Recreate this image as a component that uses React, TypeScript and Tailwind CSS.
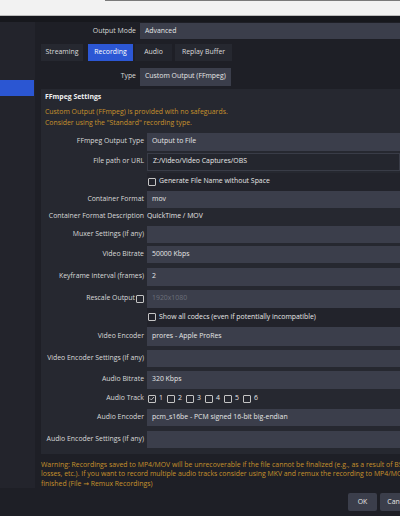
import type { ReactNode } from "react";

function Box({ checked }: { checked?: boolean }) {
  return (
    <span className="inline-flex w-[8px] h-[8px] shrink-0 items-center justify-center border border-[#c4c4c4] rounded-[1px]">
      {checked && (
        <svg viewBox="0 0 8 8" className="w-[7px] h-[7px]">
          <path d="M1.3 4.1 3.1 5.9 6.7 2" fill="none" stroke="#e4e4e4" strokeWidth="1" />
        </svg>
      )}
    </span>
  );
}

function Row({ label, cls, children }: { label: ReactNode; cls: string; children?: ReactNode }) {
  return (
    <div className={`flex items-stretch ${cls}`}>
      <div className="w-[103px] shrink-0 flex items-center justify-end text-[#d9d9d9] whitespace-nowrap">{label}</div>
      <div className="flex-1 ml-[3px] flex items-stretch min-w-0">{children}</div>
    </div>
  );
}

function Combo({ value, muted }: { value?: string; muted?: boolean }) {
  return (
    <div className={`flex-1 bg-[#3b3e4b] flex items-center pl-[5px] whitespace-nowrap ${muted ? "text-[#6c6f7a]" : "text-[#e6e6e6]"}`}>
      {value}
    </div>
  );
}

function CheckRow({ text, cls }: { text: string; cls: string }) {
  return (
    <Row label="" cls={cls}>
      <div className="flex-1 bg-[#22232b] flex items-center gap-[3px] pl-[1px] text-[#e6e6e6] whitespace-nowrap">
        <Box />
        <span>{text}</span>
      </div>
    </Row>
  );
}

const tabs = [
  { name: "Streaming", cls: "w-[42px] bg-[#262830] text-[#dcdcdc]" },
  { name: "Recording", cls: "w-[45px] ml-[5px] bg-[#2c57d4] text-white" },
  { name: "Audio", cls: "w-[37px] ml-[2px] bg-[#23252d] text-[#dcdcdc]" },
  { name: "Replay Buffer", cls: "w-[57px] ml-[3px] bg-[#262830] text-[#dcdcdc]" },
];

export default function App() {
  return (
    <div className="w-[400px] h-[516px] overflow-hidden bg-[#1e1f26] font-['Open_Sans','DejaVu_Sans',sans-serif] text-[6.9px] leading-none">
      {/* strip of the window above */}
      <div className="h-[16px] bg-[#f2f2f2] border-b border-[#bcbcbc]">
        <div className="h-[1px] ml-[105px] bg-[#7a7a7a]" />
      </div>
      <div className="h-[6px] bg-[#17181d]" />

      <div className="flex h-[466px]">
        <div className="w-[35px] shrink-0 bg-[#23242c]">
          <div className="mt-[58px] h-[16px] w-[34px] bg-[#2b56d2]" />
        </div>

        <div className="flex-1 ml-[6px] flex flex-col min-w-0">
          {/* output mode */}
          <div className="flex mt-[1px] h-[17px]">
            <div className="w-[95px] shrink-0 flex items-center justify-end text-[#d9d9d9]">Output Mode</div>
            <div className="flex-1 ml-[4px] bg-[#3b3e4b] flex items-center pl-[5px] text-[#e6e6e6]">Advanced</div>
          </div>

          {/* tabs */}
          <div className="flex mt-[5px] h-[18px]">
            {tabs.map((t) => (
              <div key={t.name} className={`flex items-center justify-center whitespace-nowrap ${t.cls}`}>
                {t.name}
              </div>
            ))}
          </div>

          {/* type */}
          <div className="flex mt-[7px] h-[18px]">
            <div className="w-[95px] shrink-0 flex items-center justify-end text-[#d9d9d9]">Type</div>
            <div className="ml-[4px] bg-[#3b3e4b] flex items-center pl-[5px] pr-[5px] text-[#e6e6e6]">Custom Output (FFmpeg)</div>
          </div>

          {/* group */}
          <div className="mt-[3px] bg-[#262830] pt-[3px] pb-[6px] flex flex-col">
            <div className="h-[10px] leading-[10px] pl-[4px] font-bold text-[#f0f0f0]">FFmpeg Settings</div>
            <div className="mt-[4px] pl-[4px] leading-[11px] text-[#c6922c]">
              <div>Custom Output (FFmpeg) is provided with no safeguards.</div>
              <div>Consider using the "Standard" recording type.</div>
            </div>

            <Row label="FFmpeg Output Type" cls="mt-[5px] h-[18px]">
              <Combo value="Output to File" />
            </Row>
            <Row label="File path or URL" cls="mt-[2px] h-[18px] mr-[-40px]">
              <div className="flex-1 bg-[#24262e] border border-[#393c47] flex items-center pl-[5px] text-[#e6e6e6] whitespace-nowrap">
                Z:/Video/Video Captures/OBS
              </div>
              <div className="w-[38px] ml-[2px] bg-[#3b3e4b]" />
            </Row>
            <CheckRow text="Generate File Name without Space" cls="mt-[2px] h-[18px]" />
            <Row label="Container Format" cls="h-[17px]">
              <Combo value="mov" />
            </Row>
            <Row label="Container Format Description" cls="h-[18px]">
              <div className="flex items-center text-[#e6e6e6] whitespace-nowrap">QuickTime / MOV</div>
            </Row>
            <Row label="Muxer Settings (if any)" cls="h-[17px]">
              <Combo />
            </Row>
            <Row label="Video Bitrate" cls="mt-[3px] h-[17px]">
              <Combo value="50000 Kbps" />
            </Row>
            <Row label="Keyframe interval (frames)" cls="mt-[5px] h-[18px]">
              <Combo value="2" />
            </Row>
            <Row
              label={
                <span className="flex items-center gap-[1px]">
                  Rescale Output
                  <Box />
                </span>
              }
              cls="mt-[4px] h-[18px]"
            >
              <Combo value="1920x1080" muted />
            </Row>
            <CheckRow text="Show all codecs (even if potentially incompatible)" cls="h-[19px]" />
            <Row label="Video Encoder" cls="h-[19px]">
              <Combo value="prores - Apple ProRes" />
            </Row>
            <Row label="Video Encoder Settings (if any)" cls="mt-[4px] h-[17px]">
              <Combo />
            </Row>
            <Row label="Audio Bitrate" cls="mt-[4px] h-[18px]">
              <Combo value="320 Kbps" />
            </Row>
            <Row label="Audio Track" cls="h-[20px]">
              <div className="flex items-center pl-[1px] text-[#e6e6e6]">
                {[1, 2, 3, 4, 5, 6].map((n) => (
                  <span key={n} className="w-[19px] flex items-center gap-[3px]">
                    <Box checked={n === 1} />
                    <span>{n}</span>
                  </span>
                ))}
              </div>
            </Row>
            <Row label="Audio Encoder" cls="h-[17px]">
              <Combo value="pcm_s16be - PCM signed 16-bit big-endian" />
            </Row>
            <Row label="Audio Encoder Settings (if any)" cls="mt-[5px] h-[17px]">
              <Combo />
            </Row>
          </div>

          {/* warning */}
          <div className="mt-[6px] leading-[9.5px] text-[#c6922c] whitespace-nowrap">
            <div>Warning: Recordings saved to MP4/MOV will be unrecoverable if the file cannot be finalized (e.g., as a result of BSODs, power</div>
            <div>losses, etc.). If you want to record multiple audio tracks consider using MKV and remux the recording to MP4/MOV after it is</div>
            <div>finished (File → Remux Recordings)</div>
          </div>
        </div>
      </div>

      {/* buttons */}
      <div className="flex justify-end gap-[3px] mt-[5px] mr-[-16px]">
        <div className="w-[29px] h-[18px] bg-[#3b3e4b] rounded-[2px] flex items-center justify-center text-[#e6e6e6]">OK</div>
        <div className="w-[36px] h-[18px] bg-[#3b3e4b] rounded-[2px] flex items-center justify-center text-[#e6e6e6]">Cancel</div>
      </div>
    </div>
  );
}
